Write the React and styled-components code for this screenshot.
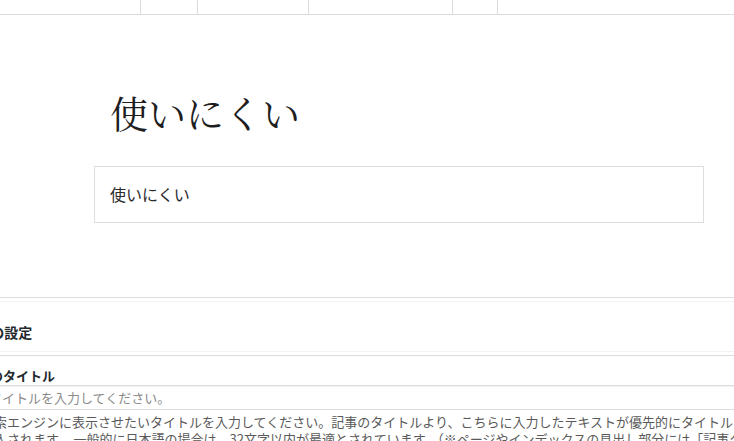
import React from 'react'
import styled, { createGlobalStyle } from 'styled-components'

const GlobalStyle = createGlobalStyle`
    html, body {
        margin: 0;
        padding: 0;
        overflow: hidden;
        background: #fff;
    }
    body {
        font-family: "Noto Sans CJK JP", "Noto Sans", sans-serif;
        color: #333;
    }
`

const Page = styled.div`
    width: 734px;
    height: 441px;
    overflow: hidden;
`

const TopBar = styled.div`
    display: flex;
    height: 14px;
    border-bottom: 1px solid #dcdcdc;
`

const TopCell = styled.div`
    width: ${props => props.w ? `${props.w}px` : 'auto'};
    flex: ${props => props.w ? 'none' : '1'};
    border-left: ${props => props.first ? 'none' : '1px solid #dcdcdc'};
    box-sizing: border-box;
`

const Editor = styled.div`
    padding: 74px 0 0 94px;
    width: 610px;
`

const PostTitle = styled.h1`
    margin: 0 0 31px 16px;
    font-family: "Noto Serif CJK JP", "Noto Sans CJK JP", serif;
    font-weight: 400;
    font-size: 38px;
    line-height: 46px;
    color: #1e1e1e;
`

const Paragraph = styled.div`
    border: 1px solid #dedede;
    padding: 16px 15px;
    font-size: 16px;
    line-height: 23px;
    color: #2b2b2b;
`

const MetaBox = styled.div`
    margin-top: 74px;
    margin-left: -40px;
    width: 900px;
`

const BoxHeader = styled.div`
    border-top: 1px solid #dcdcdc;
    border-bottom: 1px solid #dcdcdc;
    padding: 3px 0;
`

const BoxTitle = styled.h2`
    margin: 0;
    border-top: 1px solid #f3f3f3;
    border-bottom: 1px solid #f3f3f3;
    padding: 20px 0 9px 2px;
    font-size: 14px;
    line-height: 20px;
    font-weight: 700;
    color: #23282d;
`

const FieldLabel = styled.label`
    display: block;
    padding: 10px 0 0 4px;
    font-size: 13px;
    line-height: 19px;
    font-weight: 700;
    color: #23282d;
`

const TextInput = styled.input`
    display: block;
    box-sizing: border-box;
    margin: 0 0 0 20px;
    width: 860px;
    height: 25px;
    padding: 0 8px;
    border: 1px solid #dcdcdc;
    box-shadow: inset 0 3px 0 -2px #f4f4f4;
    font-family: "Noto Sans CJK JP", sans-serif;
    font-size: 13px;
    outline: none;

    &::placeholder {
        color: #8a8a8a;
    }
`

const Description = styled.p`
    margin: 3px 0 0 21px;
    width: 795px;
    font-size: 13px;
    line-height: 17px;
    color: #5a5a5a;
`

const cells = [140, 57, 111, 144, 45, null]

const App = () => {
    return (
        <Page>
            <GlobalStyle />
            <TopBar>
                {cells.map((w, i) => (
                    <TopCell key={i} w={w} first={i === 0} />
                ))}
            </TopBar>
            <Editor>
                <PostTitle>使いにくい</PostTitle>
                <Paragraph>使いにくい</Paragraph>
            </Editor>
            <MetaBox>
                <BoxHeader>
                    <BoxTitle>SEOの設定</BoxTitle>
                </BoxHeader>
                <FieldLabel htmlFor="seo-title">SEOのタイトル</FieldLabel>
                <TextInput id="seo-title" placeholder="タイトルを入力してください。" />
                <Description>
                    検索エンジンに表示させたいタイトルを入力してください。記事のタイトルより、こちらに入力したテキストが優先的にタイトルタグに挿入されます。 一般的に日本語の場合は、32文字以内が最適とされています。（※ページやインデックスの見出し部分には「記事タイトル」が利用されます）
                </Description>
            </MetaBox>
        </Page>
    )
}

export default App
